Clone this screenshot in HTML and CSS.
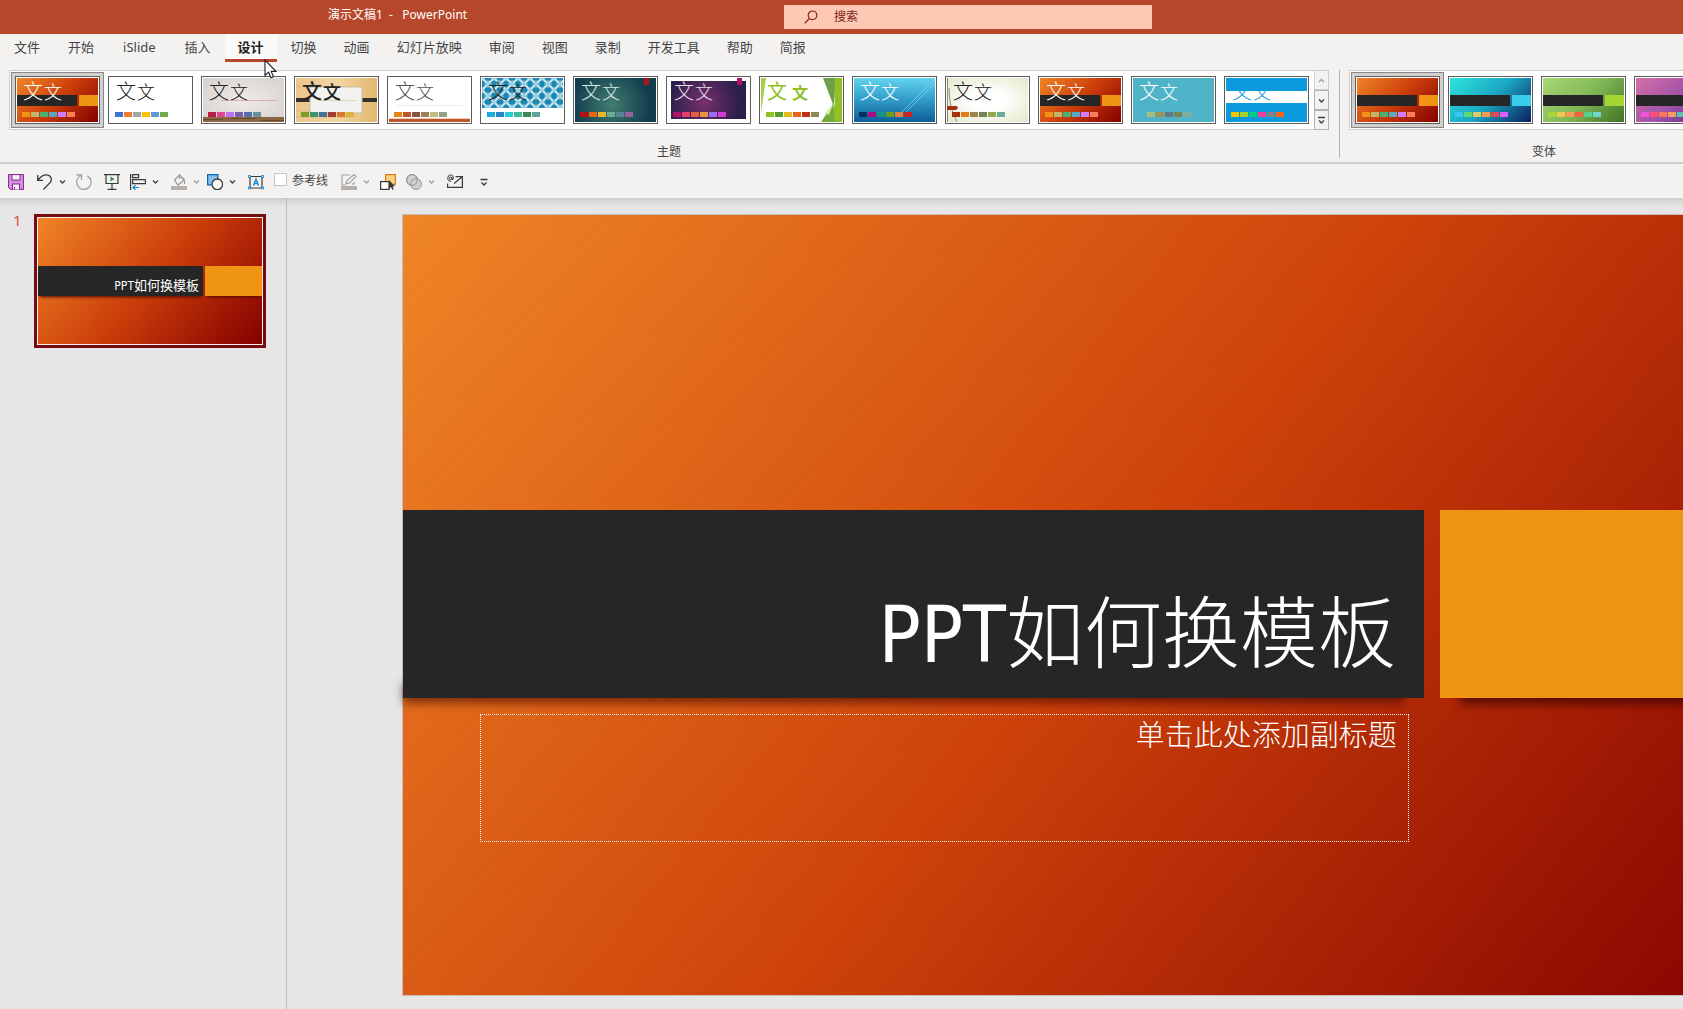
FILE: index.html
```html
<!DOCTYPE html>
<html lang="zh-CN">
<head>
<meta charset="utf-8">
<title>演示文稿1 - PowerPoint</title>
<link rel="stylesheet" href="styles.css">
</head>
<body>
<svg class="defs" aria-hidden="true">
  <defs>
    <symbol id="chev" viewBox="0 0 7 16"><path d="M1 6.5l2.500 2.500L6 6.500" fill="none" stroke="currentColor" stroke-width="1.400"/></symbol>
    <pattern id="lattice" width="12" height="12" patternUnits="userSpaceOnUse">
      <rect width="12" height="12" fill="#1c88b3"/>
      <path d="M0 0l12 12M12 0L0 12" stroke="#cfe8f1" stroke-width="2"/>
      <path d="M6 2v8M2 6h8M0 0h3M9 0h3M0 12h3M9 12h3M0 0v3M0 9v3M12 0v3M12 9v3" stroke="#8fc8de" stroke-width="1.200"/>
    </pattern>
  </defs>
</svg>
<header class="titlebar">
  <h1 class="doc-name">演示文稿1&nbsp; -&nbsp;&nbsp; PowerPoint</h1>
  <label class="search">
    <svg width="14" height="14" viewBox="0 0 14 14" fill="none" stroke="#8a2318" stroke-width="1.200"><circle cx="8.500" cy="5.300" r="4.300"/><path d="M5.400 8.500L.7 13.300"/></svg>
    <input type="search" placeholder="搜索" aria-label="搜索">
  </label>
</header>
<nav class="tabs">
  <button class="file">文件</button><button>开始</button><button class="addin">iSlide</button><button>插入</button><button class="active">设计</button><button>切换</button><button>动画</button><button>幻灯片放映</button><button>审阅</button><button>视图</button><button>录制</button><button>开发工具</button><button>帮助</button><button>简报</button>
  <svg class="cursor" width="13" height="20" viewBox="0 0 13 20"><path d="M1 1v15.500l3.600-3.300L7 18.800l2.500-1L7.200 12.400h4.700z" fill="#fff" stroke="#1b1b2b" stroke-width="1.100"/></svg>
</nav>
<section class="ribbon">
  <div class="group">
    <div class="gallery">
      <div class="thumbs">
        <button class="thumb selected" aria-label="主题 1"><span class="art berlin"><span class="bars"></span><span class="wen"><b>文</b>文</span><span class="sw"><i></i><i></i><i></i><i></i><i></i><i></i></span></span></button>
        <button class="thumb" aria-label="Office"><span class="art office"><span class="wen"><b>文</b>文</span><span class="sw"><i></i><i></i><i></i><i></i><i></i><i></i></span></span></button>
        <button class="thumb" aria-label="画廊"><span class="art gallery-art"><svg viewBox="0 0 81 44"><path d="M18 22.500h56" stroke="#e3a9b8"/><rect y="39" width="81" height="5" fill="#8a6643"/><path d="M0 41.500h20M28 40.500h25M58 42.500h23" stroke="#6b4a2c"/></svg><span class="wen"><b>文</b>文</span><span class="sw"><i></i><i></i><i></i><i></i><i></i><i></i></span></span></button>
        <button class="thumb" aria-label="包裹"><span class="art parcel"><svg viewBox="0 0 81 44"><path d="M0 9h81M0 33h81M0 39h60" stroke="#e3b878"/><path d="M0 20h81v4H0z" fill="#33302d"/><path d="M14 9h52v26H14z" fill="#f1f1f0" stroke="#cbbf9e"/><path d="M24 22.500h36" stroke="#d9d9b8"/></svg><span class="wen brush"><b>文</b>文</span><span class="sw"><i></i><i></i><i></i><i></i><i></i><i></i></span></span></button>
        <button class="thumb" aria-label="回顾"><span class="art retro"><svg viewBox="0 0 81 44"><path d="M8 27.500h66" stroke="#ececec"/><path d="M0 40.500h81" stroke="#f0cdb4"/><rect y="41" width="81" height="3" fill="#bc582c"/></svg><span class="wen"><b>文</b>文</span><span class="sw"><i></i><i></i><i></i><i></i><i></i><i></i></span></span></button>
        <button class="thumb" aria-label="积分"><span class="art integral"><svg viewBox="0 0 81 44"><rect width="81" height="30" fill="url(#lattice)"/></svg><span class="wen"><b>文</b>文</span><span class="sw"><i></i><i></i><i></i><i></i><i></i><i></i></span></span></button>
        <button class="thumb" aria-label="离子"><span class="art ion"><svg viewBox="0 0 81 44"><rect x="69" width="5" height="7" fill="#b01513"/></svg><span class="wen"><b>文</b>文</span><span class="sw"><i></i><i></i><i></i><i></i><i></i><i></i></span></span></button>
        <button class="thumb" aria-label="离子会议室"><span class="art boardroom"><svg viewBox="0 0 81 44"><path d="M0 0h81v44H0zM3 3v38h75V3z" fill="#fff" fill-rule="evenodd"/><rect x="69" width="5" height="7" fill="#b31166"/></svg><span class="wen"><b>文</b>文</span><span class="sw"><i></i><i></i><i></i><i></i><i></i><i></i></span></span></button>
        <button class="thumb" aria-label="平面"><span class="art facet"><svg viewBox="0 0 81 44"><path d="M0 0h5L0 35z" fill="#a3cf4c"/><path d="M72 0h9v44H66l8-18z" fill="#90c226"/><path d="M62 0h12l-1 29z" fill="#6f9e4d"/><path d="M72 26l2 18H60z" fill="#73ab3c"/><path d="M72 26l-8 9 4 2z" fill="#d3e8a8"/></svg><span class="wen"><b>文</b>文</span><span class="sw"><i></i><i></i><i></i><i></i><i></i><i></i></span></span></button>
        <button class="thumb" aria-label="切片"><span class="art slice"><svg viewBox="0 0 81 44"><path d="M81 1L48 34M81 5L52 34" stroke="#8dd3ec" stroke-opacity=".7" fill="none"/></svg><span class="wen"><b>文</b>文</span><span class="sw"><i></i><i></i><i></i><i></i><i></i><i></i></span></span></button>
        <button class="thumb" aria-label="丝状"><span class="art wisp"><svg viewBox="0 0 81 44"><path d="M.5 0v44M2 10q0 20 8 34" stroke="#8e8b75" fill="none"/><path d="M0 28h10l1 2-2 2H0z" fill="#a53010"/></svg><span class="wen"><b>文</b>文</span><span class="sw"><i></i><i></i><i></i><i></i><i></i><i></i></span></span></button>
        <button class="thumb" aria-label="柏林"><span class="art berlin"><span class="bars"></span><span class="wen"><b>文</b>文</span><span class="sw"><i></i><i></i><i></i><i></i><i></i><i></i></span></span></button>
        <button class="thumb" aria-label="天体"><span class="art teal"><span class="wen"><b>文</b>文</span><span class="sw"><i></i><i></i><i></i><i></i><i></i></span></span></button>
        <button class="thumb" aria-label="带状"><span class="art banded"><span class="wen"><b>文</b>文</span><svg viewBox="0 0 81 44"><rect width="81" height="13" fill="#0c9adf"/></svg><span class="sw"><i></i><i></i><i></i><i></i><i></i><i></i></span></span></button>
      </div>
      <div class="scroll">
        <button disabled aria-label="上一行"><svg width="9" height="9" viewBox="0 0 9 9"><path d="M2 6l2.500-2.500L7 6"/></svg></button>
        <button aria-label="下一行"><svg width="9" height="9" viewBox="0 0 9 9"><path d="M2 3.500L4.500 6 7 3.500"/></svg></button>
        <button aria-label="其他"><svg width="9" height="9" viewBox="0 0 9 9"><path d="M1 1.500h7M2 4.500L4.500 7 7 4.500"/></svg></button>
      </div>
    </div>
    <h2>主题</h2>
  </div>
  <div class="group variants">
    <div class="gallery">
      <div class="thumbs">
        <button class="thumb selected" aria-label="变体 1"><span class="art berlin"><span class="bars"></span><span class="sw"><i></i><i></i><i></i><i></i><i></i><i></i></span></span></button>
        <button class="thumb" aria-label="变体 2"><span class="art v-blue"><span class="bars"></span><span class="sw"><i></i><i></i><i></i><i></i><i></i><i></i></span></span></button>
        <button class="thumb" aria-label="变体 3"><span class="art v-green"><span class="bars"></span><span class="sw"><i></i><i></i><i></i><i></i><i></i><i></i></span></span></button>
        <button class="thumb" aria-label="变体 4"><span class="art v-pink"><span class="bars"></span><span class="sw"><i></i><i></i><i></i><i></i><i></i><i></i></span></span></button>
      </div>
      <div class="scroll"></div>
    </div>
    <h2>变体</h2>
  </div>
</section>
<div class="quickbar">
  <button aria-label="保存"><svg width="16" height="16" viewBox="0 0 16 16"><path d="M.5.5h15v15h-13l-2-2z" fill="#d18edb" stroke="#8a2c9c"/><path d="M4 .5h8v5.500H4zM4.500 15.500V10h7v5.500" fill="#f7f2f8" stroke="#8a2c9c"/><path d="M6.500 13v2.500" stroke="#8a2c9c"/></svg></button>
  <button class="wide" aria-label="撤消"><svg width="16" height="16" viewBox="0 0 16 16" fill="none" stroke="#3b3a39" stroke-width="1.300"><path d="M.7 1v5.300H6M1 6Q6-.3 11 1.200q5 2 2.500 7L6.500 15.500"/></svg><svg class="chev"><use href="#chev"/></svg></button>
  <button aria-label="重复"><svg width="16" height="16" viewBox="0 0 16 16" fill="none" stroke="#a5a3a1" stroke-width="1.300"><path d="M.5 1h5v5M5.300 1.500a7.200 7.200 0 1 0 6 .4"/></svg></button>
  <button class="step" aria-label="放映"><svg width="16" height="16" viewBox="0 0 16 16" fill="none" stroke="#3b3a39" stroke-width="1.200"><path d="M0 .7h16M2 1v8.500h12V1M8 10v5M3.500 15.300h9"/><path d="M6.500 2.500v5L10.500 5z" fill="#2b9348" stroke="none"/></svg></button>
  <button class="wide" aria-label="对齐"><svg width="16" height="16" viewBox="0 0 16 16" fill="none" stroke="#3b3a39" stroke-width="1.200"><path d="M.6 0v16M2.600.6h6v3h-6zM2.600 5.600h12.800v4H2.600z"/><path d="M9 13.500H3M5.500 11L3 13.500 5.500 16" stroke="#1e88d2"/></svg><svg class="chev"><use href="#chev"/></svg></button>
  <button class="wide step dim" aria-label="形状填充"><svg width="16" height="16" viewBox="0 0 16 16" fill="none" stroke="#9b9997" stroke-width="1.200"><path d="M3.500 6L8.500 1l4.500 5-6 5z"/><path d="M8.500 5V0M11 3.500q3 2 2.500 6.500"/><path d="M0 12h16v4H0z" fill="#b3b0ad" stroke="none"/></svg><svg class="chev"><use href="#chev"/></svg></button>
  <button class="wide near" aria-label="形状"><svg width="16" height="16" viewBox="0 0 16 16"><path d="M.6.6h10.300v10.300H.6z" fill="#83beec" stroke="#0a64b4" stroke-width="1.200"/><circle cx="10.300" cy="10.300" r="5.300" fill="#fafafa" stroke="#3b3a39" stroke-width="1.300"/></svg><svg class="chev"><use href="#chev"/></svg></button>
  <button class="step" aria-label="文本框"><svg width="16" height="16" viewBox="0 0 16 16"><path d="M2 2.500h12v11.500H2z" fill="none" stroke="#3b3a39" stroke-width="1.200"/><path d="M5.500 11.500L8 5l2.500 6.500M6.500 9.500h3" fill="none" stroke="#1e88d2" stroke-width="1.500"/><g fill="#fff" stroke="#1e88d2"><path d="M.5 1.500h2v2h-2zM13.500 1.500h2v2h-2zM.5 13h2v2h-2zM13.500 13h2v2h-2z"/></g></svg></button>
  <label class="check"><input type="checkbox">参考线</label>
  <button class="wide dim spaced" aria-label="形状轮廓"><svg width="16" height="16" viewBox="0 0 16 16" fill="none" stroke="#a19f9d" stroke-width="1.100"><path d="M9 1H1v10h3M11 10h2V8M5 10l1-3.500L13 .5 15 2.500 8.500 9z"/><path d="M0 12h16v4H0z" fill="#b3b0ad" stroke="none"/></svg><svg class="chev"><use href="#chev"/></svg></button>
  <button aria-label="选择"><svg width="16" height="16" viewBox="0 0 16 16"><path d="M5.600.6h9.800v9.800H5.600z" fill="#f9d384" stroke="#dd7a10" stroke-width="1.200"/><path d="M.6 7.600H9v7.800H.6z" fill="#fff" stroke="#3b3a39" stroke-width="1.200"/><path d="M9 6v9l2-2 1.500 3 1.200-.7-1.200-2.800H15z" fill="#3b3a39"/></svg></button>
  <button class="wide dim" aria-label="合并形状"><svg width="16" height="16" viewBox="0 0 16 16" fill="#d2d0ce" stroke="#979593"><circle cx="6" cy="6" r="5.400"/><circle cx="10" cy="10" r="5.400"/><circle cx="6" cy="6" r="5.400" fill="none"/></svg><svg class="chev"><use href="#chev"/></svg></button>
  <button class="step" aria-label="邮件"><svg width="16" height="16" viewBox="0 0 16 16" fill="none" stroke="#3b3a39" stroke-width="1.200"><path d="M8.500 2.600h6.900v10.800H.6V9.500M7 9.500l8-6.500"/><circle cx="3.600" cy="4.300" r="1.300" stroke-width="1"/><path d="M4.900 3v2.500q2 .3 1.600-2Q6 .8 3.600.8T.6 4.300q.2 3.200 3.400 3.200" stroke-width="1"/></svg></button>
  <button class="last" aria-label="自定义"><svg width="8" height="16" viewBox="0 0 8 16" fill="none" stroke="#3b3a39" stroke-width="1.300"><path d="M.5 5.500h7M1.500 8.500L4 11l2.500-2.500"/></svg></button>
</div>
<main class="workspace">
  <aside class="outline">
    <span class="num">1</span>
    <button class="mini" aria-label="幻灯片 1">
      <span class="mini-slide"><span class="mini-dark"><span class="latin">PPT</span>如何换模板</span><span class="mini-orange"></span></span>
    </button>
  </aside>
  <section class="stage">
    <article class="slide">
      <div class="title-box"><h2><span class="latin">PPT</span>如何换模板</h2></div>
      <div class="accent"></div>
      <p class="subtitle">单击此处添加副标题</p>
    </article>
  </section>
</main>
</body>
</html>
```
FILE: styles.css
```css
* { box-sizing: border-box; }
body {
  margin: 0;
  height: 100vh;
  overflow: hidden;
  display: flex;
  flex-direction: column;
  background: #e6e6e6;
  color: #444;
  font-family: "Noto Sans", "Noto Sans CJK SC", sans-serif;
  font-size: 12px;
}
button {
  margin: 0;
  padding: 0;
  border: 0;
  background: none;
  color: inherit;
  font: inherit;
}
h1, h2, p { margin: 0; font-weight: 400; }
svg { display: block; }
.defs { position: absolute; width: 0; height: 0; }

.titlebar {
  flex: none;
  display: grid;
  grid-template-columns: 784px 368px 1fr;
  align-items: center;
  height: 34px;
  background: #b7472a;
}
.doc-name {
  padding: 0 0 4px 328px;
  color: #fff;
  font-size: 12px;
  line-height: 18px;
  white-space: nowrap;
}
.search {
  display: flex;
  align-items: center;
  gap: 16px;
  height: 24px;
  padding-left: 20px;
  background: #fdc9b5;
}
.search input {
  flex: 1;
  min-width: 0;
  padding: 0 0 2px;
  border: 0;
  outline: 0;
  background: none;
  color: #7c1d15;
  font: inherit;
}
.search input::placeholder { color: #7c1d15; opacity: 1; }

.tabs {
  position: relative;
  flex: none;
  display: flex;
  gap: 1px;
  height: 36px;
  padding-left: 1px;
  background: #f3f2f1;
}
.tabs button {
  height: 28px;
  padding: 2px 13px 0;
  border-bottom: 3px solid transparent;
  font-size: 13px;
  line-height: 23px;
  white-space: nowrap;
}
.tabs .file { margin-right: 1px; }
.tabs .addin { padding: 2px 15px 0; }
.tabs .active {
  border-color: #b7472a;
  background: #faf9f8;
  color: #222;
  font-weight: 700;
}
.cursor { position: absolute; left: 264px; top: 25px; z-index: 2; }

.ribbon {
  flex: none;
  display: flex;
  height: 94px;
  padding-left: 9px;
  overflow: hidden;
  border-bottom: 2px solid #d0cfcd;
  background: #f3f2f1;
}
.group { flex: none; text-align: center; }
.group h2 { padding-top: 12px; font-size: 12px; line-height: 20px; }
.variants {
  position: relative;
  margin-left: 20px;
}
.variants::before {
  content: "";
  position: absolute;
  left: -10px;
  top: 0;
  width: 1px;
  height: 88px;
  background: #b3b1af;
}
.gallery { display: flex; height: 60px; }
.thumbs {
  display: flex;
  gap: 8px;
  padding: 5px;
  border: 1px solid #d2d0ce;
  border-right: 0;
  background: #fff;
}
.scroll { display: flex; flex-direction: column; width: 15px; }
.scroll button {
  flex: 1;
  display: grid;
  place-items: center;
  border: 1px solid #b3b1af;
  background: #f3f2f1;
}
.scroll button:disabled { border-color: #d2d0ce; color: #a19f9d; }
.scroll path { fill: none; stroke: currentColor; stroke-width: 1.4; }

.thumb {
  flex: none;
  width: 85px;
  height: 48px;
  padding: 1px;
  border: 1px solid #605e5c;
  background: #fff;
}
.thumb.selected { box-shadow: 0 0 0 3px #d2d0ce, 0 0 0 4px #8a8886; }
.art {
  position: relative;
  display: flex;
  flex-direction: column;
  justify-content: space-between;
  width: 81px;
  height: 44px;
  padding: 2px 5px 5px;
  overflow: hidden;
}
.art > svg, .bars { position: absolute; left: 0; top: 0; width: 81px; height: 44px; }
.bars {
  background:
    linear-gradient(#262626, #262626) 0 17px / 60px 11px no-repeat,
    linear-gradient(var(--accent), var(--accent)) 62px 17px / 19px 11px no-repeat;
}
.wen {
  position: relative;
  display: flex;
  align-items: baseline;
  gap: 1px;
  height: 24px;
  padding-left: 1px;
  color: var(--ink);
  font-size: 18px;
  font-weight: 300;
  line-height: 24px;
}
.wen b { font-size: 20px; font-weight: 300; }
.brush, .brush b { font-weight: 500; }
.sw { position: relative; display: flex; gap: 1px; margin-top: auto; }
.sw i { width: 8px; height: 5px; }
.sw i:nth-child(1) { background: var(--c1); }
.sw i:nth-child(2) { background: var(--c2); }
.sw i:nth-child(3) { background: var(--c3); }
.sw i:nth-child(4) { background: var(--c4); }
.sw i:nth-child(5) { background: var(--c5); }
.sw i:nth-child(6) { background: var(--c6); }

.berlin { --ink: #fff; --accent: #f09415; --c1: #f09415; --c2: #c1b56b; --c3: #4baf73; --c4: #5aa6c0; --c5: #d17df9; --c6: #fa7e5c; background: linear-gradient(135deg, #f08427, #cb3e0a 50%, #840000); }
.office { --ink: #222; --c1: #4472c4; --c2: #ed7d31; --c3: #a5a5a5; --c4: #ffc000; --c5: #5b9bd5; --c6: #70ad47; background: #fff; }
.gallery-art { --ink: #222; --c1: #b71e42; --c2: #de478e; --c3: #bc72f0; --c4: #795faf; --c5: #586ea6; --c6: #6892a0; background: radial-gradient(#efebe9, #d8d1cd); }
.parcel { --ink: #222; --c1: #809a26; --c2: #3c9770; --c3: #44709d; --c4: #a23c33; --c5: #d97828; --c6: #deb340; background: linear-gradient(90deg, #eac58a, #f2d6a3 50%, #e2b76e); }
.retro { --ink: #555; --c1: #e48312; --c2: #bd582c; --c3: #865640; --c4: #9b8357; --c5: #c2bc80; --c6: #94a088; background: #fff; }
.integral { --ink: #222; --c1: #1cade4; --c2: #2683c6; --c3: #27ced7; --c4: #42ba97; --c5: #3e8853; --c6: #62a39f; background: #fff; }
.ion { --ink: #d9e6e4; --c1: #b01513; --c2: #ea6312; --c3: #e6b729; --c4: #6aac90; --c5: #54849a; --c6: #9e5e9b; background: radial-gradient(circle at 45% 60%, #3f7d70, #123d4d 75%); }
.boardroom { --ink: #e4dbe8; --c1: #b31166; --c2: #e33d6f; --c3: #e45f3c; --c4: #e9943a; --c5: #9b6bf2; --c6: #d53dd0; background: radial-gradient(circle at 45% 55%, #77306b, #2b1f4b 70%); }
.facet { --ink: #90c226; --c1: #90c226; --c2: #54a021; --c3: #e6b91e; --c4: #e76618; --c5: #c42f1a; --c6: #918655; background: #fff; }
.slice { --ink: #fff; --c1: #052f61; --c2: #a50e82; --c3: #14967c; --c4: #6a9e1f; --c5: #e87d37; --c6: #c62324; background: linear-gradient(#64d3ef, #2f9cc8 50%, #0d5e97); }
.wisp { --ink: #222; --c1: #a53010; --c2: #de7e18; --c3: #9f8351; --c4: #728653; --c5: #92aa4c; --c6: #6aac91; background: radial-gradient(#fff 30%, #e2e8c8); }
.teal { --ink: #fff; --c1: #a9bd83; --c2: #9a9458; --c3: #63768a; --c4: #728657; --c5: #83ac9c; background: #50b4c8; }
.teal .sw { padding-left: 9px; }
.banded { --ink: #1c9be0; --c1: #ffc000; --c2: #a5d028; --c3: #08cc78; --c4: #f24099; --c5: #828288; --c6: #f56617; background: linear-gradient(#0c9adf 13px, #fff 13px 25px, #0c9adf 25px); }
.facet .wen { gap: 5px; font-size: 16px; font-weight: 700; }
.facet .wen b { font-weight: 400; }
.v-blue { --accent: #39cbe9; --c1: #36cbee; --c2: #60d872; --c3: #dccc63; --c4: #f39c4f; --c5: #e44951; --c6: #dd60fb; background: linear-gradient(135deg, #2ce5dc, #1ba6c4 50%, #0b1f5e); }
.v-green { --accent: #a6d633; --c1: #a6d633; --c2: #eccb50; --c3: #fb9a55; --c4: #f3623f; --c5: #54d28b; --c6: #6cd9cc; background: linear-gradient(135deg, #a7d873, #82b957 50%, #3f7325); }
.v-pink { --accent: #f353e3; --c1: #f353e3; --c2: #fb4e7c; --c3: #f9765c; --c4: #fb9c60; --c5: #4fc6b6; --c6: #5c9ce0; background: linear-gradient(135deg, #d46fa8, #a152a8 50%, #44276f); }

.quickbar {
  flex: none;
  display: flex;
  align-items: center;
  gap: 10px;
  height: 34px;
  padding: 2px 8px 0;
  background: #f3f2f1;
}
.quickbar button { flex: none; display: flex; height: 16px; }
.quickbar .wide { justify-content: space-between; width: 29px; }
.quickbar .chev { width: 7px; height: 16px; }
.dim { color: #a5a3a1; }
.quickbar .step { margin-left: 2px; }
.quickbar .near { margin-left: -3px; }
.quickbar .spaced, .quickbar button:nth-child(2) { margin-left: 3px; }
.quickbar .last { margin-left: 7px; }
.check { display: flex; gap: 5px; align-items: center; height: 20px; margin-bottom: 5px; }
.check input {
  appearance: none;
  width: 13px;
  height: 13px;
  margin: 0;
  border: 1px solid #c8c6c4;
  background: #fff;
}

.workspace {
  flex: 1;
  min-height: 0;
  display: flex;
  overflow: hidden;
  background: linear-gradient(#cfcecd, #e6e6e6 8px);
}
.outline {
  flex: none;
  display: flex;
  align-items: flex-start;
  width: 287px;
  padding: 16px 0 0 13px;
  border-right: 1px solid #bdbcbb;
}
.num { width: 21px; color: #d4553a; font-size: 15px; line-height: 12px; }
.mini {
  width: 232px;
  height: 134px;
  border: 3px solid #760b12;
  padding: 1px;
  background: #f4f0ee;
}
.mini-slide {
  display: grid;
  grid-template: 48px 30px 1fr / 165px 1fr;
  column-gap: 2px;
  height: 100%;
  background: linear-gradient(130deg, #f08427, #cb3e0a 50%, #840000);
}
.mini-dark, .mini-orange { grid-row: 2; box-shadow: 0 3px 3px -2px #500800; }
.mini-dark {
  padding: 6px 4px 0 0;
  background: #262626;
  color: #fff;
  font-size: 13px;
  line-height: 26px;
  text-align: right;
}
.mini-orange { background: #f09415; }

.stage {
  flex: 1;
  display: flex;
  min-width: 0;
  padding: 16px 0 13px 115px;
  overflow: hidden;
}
.slide {
  flex: none;
  display: grid;
  grid-template-columns: 77fr 928fr 15fr 16fr 351fr;
  grid-template-rows: 295fr 188fr 16fr 128fr 153fr;
  height: 100%;
  aspect-ratio: 16 / 9;
  border: 1px solid #c4bfba;
  background:
    repeating-linear-gradient(135deg, rgba(90, 20, 0, .04) 0 1px, transparent 1px 3px),
    linear-gradient(129deg, #f18727, #cf430a 50%, #840000);
}
.title-box, .accent { position: relative; grid-row: 2; }
.title-box::before, .accent::before {
  content: "";
  position: absolute;
  inset: auto 20px 0 20px;
  height: 20px;
  box-shadow: 0 6px 10px rgba(60, 5, 0, .75);
}
.title-box::before { left: 0; box-shadow: 0 5px 10px rgba(60, 5, 0, .6); }
.title-box { grid-column: 1 / 4; }
.title-box h2 {
  position: relative;
  height: 100%;
  padding: 64px 28px 0 0;
  background: #262626;
  color: #fff;
  font-size: 78px;
  font-weight: 300;
  line-height: 116px;
  text-align: right;
}
.latin { font-family: "DejaVu Sans Condensed", "DejaVu Sans", sans-serif; font-weight: 400; }
.mini .latin { font-size: 12px; }
.accent { grid-column: 5; }
.accent::after { content: ""; position: absolute; inset: 0; background: #f09415; }
.subtitle {
  position: relative;
  grid-area: 4 / 2;
  padding: 2px 11px;
  border: 1px dotted #fff;
  color: #fff;
  font-size: 29px;
  font-weight: 300;
  line-height: 36px;
  text-align: right;
}
```
